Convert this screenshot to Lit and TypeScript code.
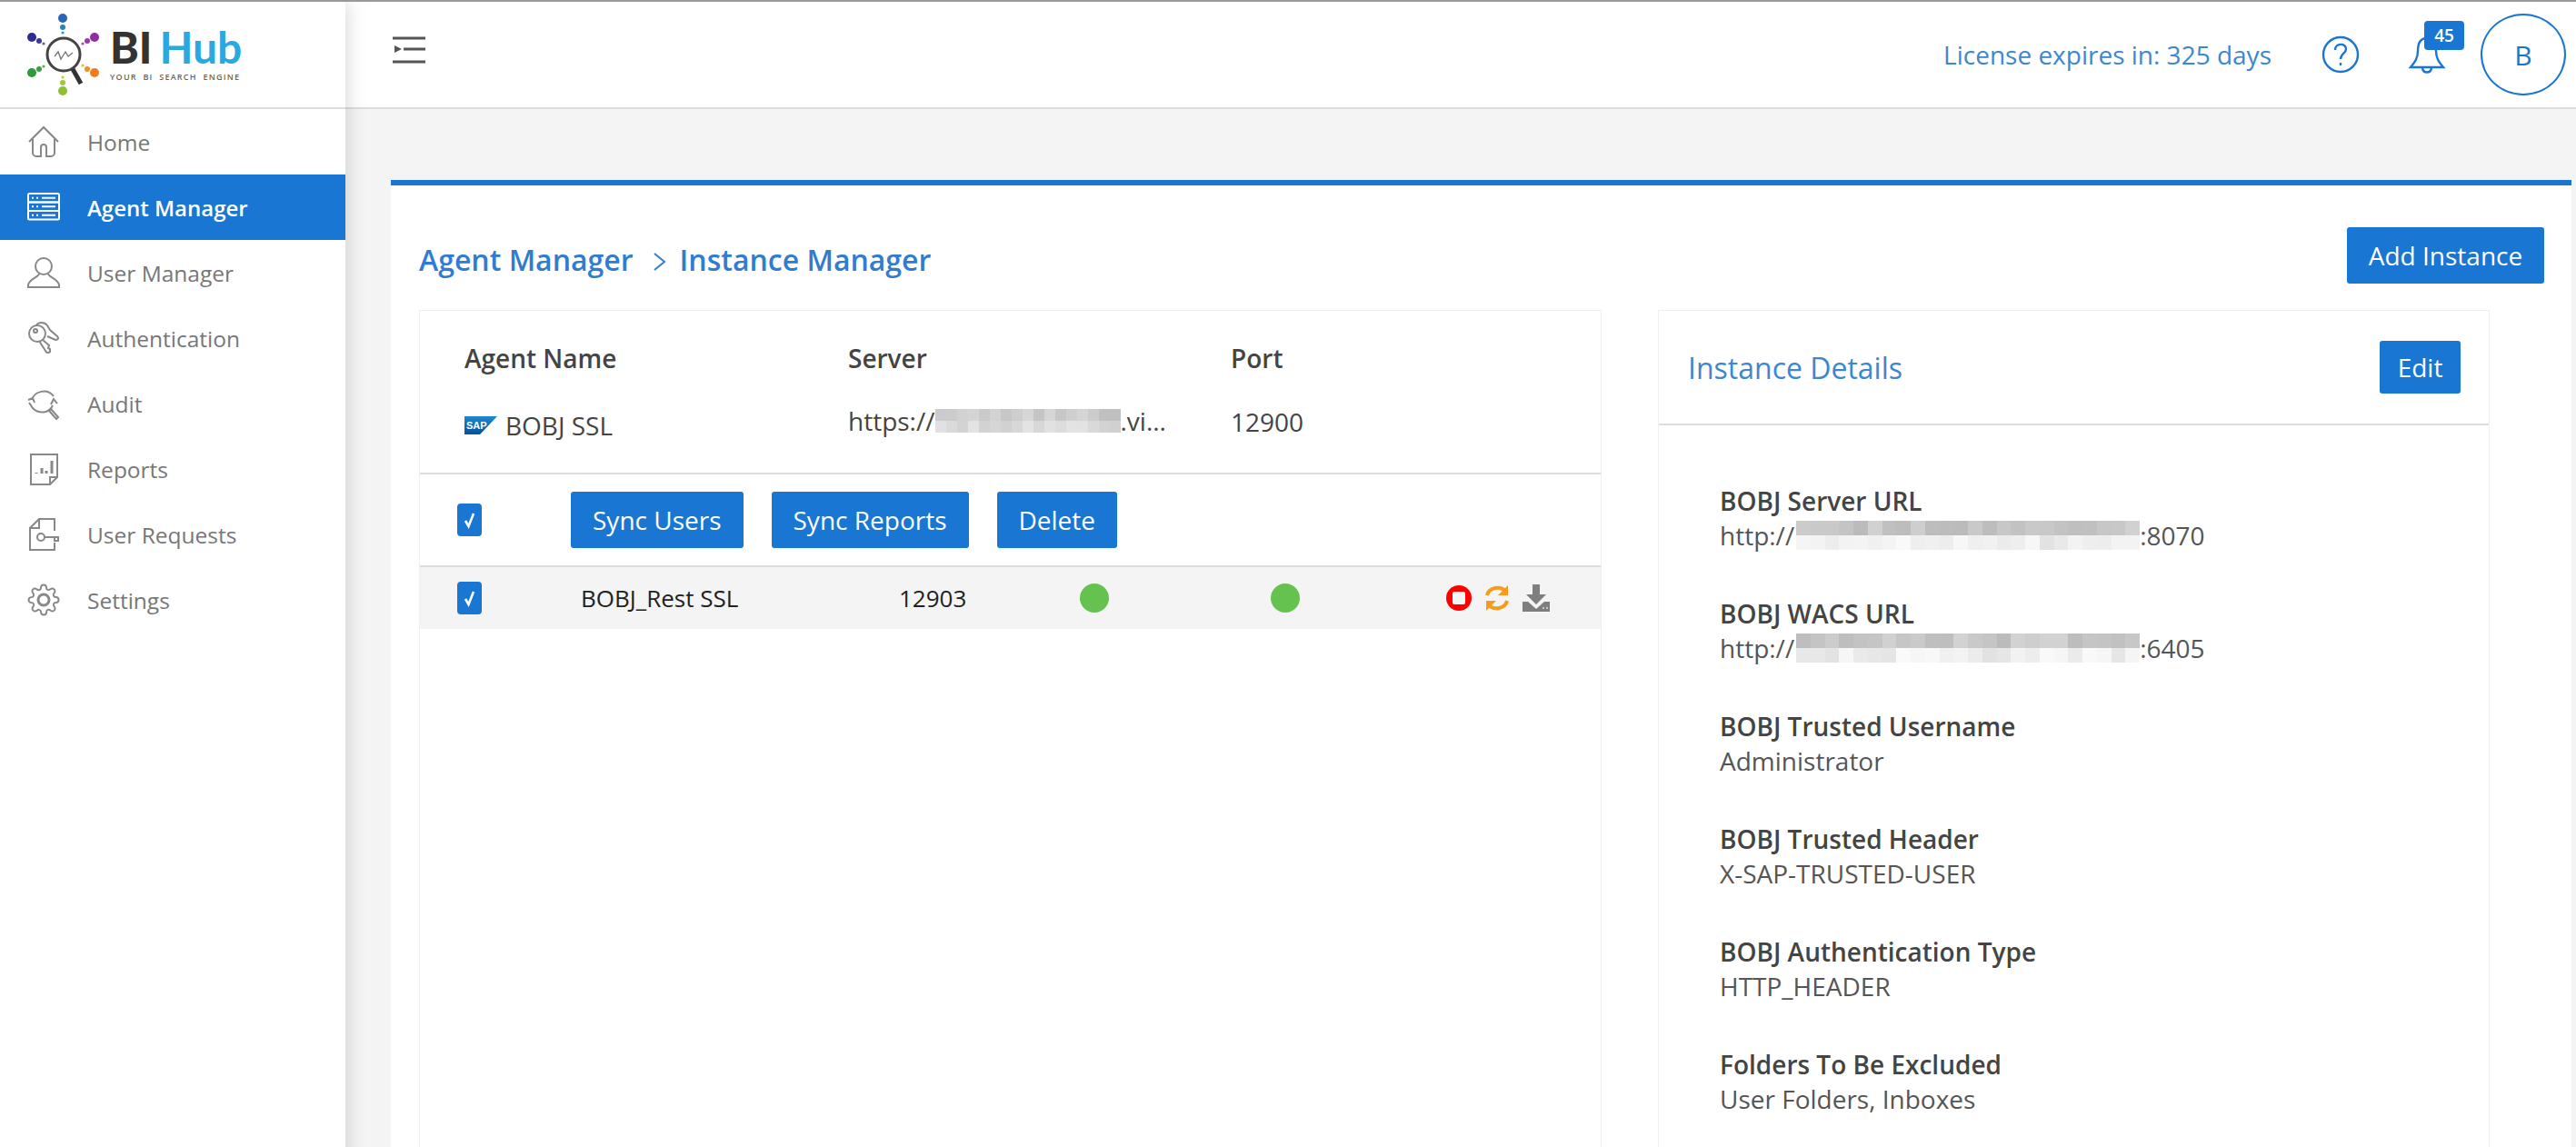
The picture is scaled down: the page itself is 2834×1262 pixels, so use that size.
import { LitElement, html, css, svg } from 'lit';
import { customElement } from 'lit/decorators.js';

const navItems = [
  { label: 'Home', icon: svg`<path d="M2 18 18 2l16 16"/><path d="M6 15v15a4 4 0 0 0 4 4h5V24a3 3 0 0 1 6 0v10h5a4 4 0 0 0 4-4V15"/>` },
  {
    label: 'Agent Manager',
    active: true,
    icon: svg`<rect x="1" y="3" width="34" height="9.5" rx="1.5"/><rect x="1" y="12.5" width="34" height="9.5" rx="1.5"/><rect x="1" y="22" width="34" height="9.5" rx="1.5"/><path d="M5 7.7h2M10 7.7h2M16 7.7h15M5 17.2h2M10 17.2h2M16 17.2h15M5 26.7h2M10 26.7h2M16 26.7h15"/>`,
  },
  { label: 'User Manager', icon: svg`<circle cx="18" cy="11" r="9"/><path d="M13 19c0 4-12 6-12 13v2h34v-2c0-7-12-9-12-13"/>` },
  {
    label: 'Authentication',
    icon: svg`<circle cx="11" cy="13" r="9"/><circle cx="9" cy="10" r="2"/><path d="M10 4c2-4 9-4 12 0l3 5 8 7c2 2 1 4-2 4l-9-4"/><path d="M17 20l7 6-1 3 2 1v3c-2 2-4 1-5-1l-7-11"/>`,
  },
  {
    label: 'Audit',
    icon: svg`<path d="M5 14C8 4 22 1 29 10"/><path d="M28 20c-4 9-15 10-22 3L2 17"/><path d="M1 14l5-2 2 5"/><path d="M26 19l3-6 4 5"/><path d="M26 24l8 9-2 2-8-9z"/>`,
  },
  {
    label: 'Reports',
    icon: svg`<path d="M4 2h29v25l-8 8H4z"/><path d="M33 27h-8v8"/><path d="M10 23v-1M16 23v-6M21 23v-3M27 23V9" stroke-width="3"/>`,
  },
  {
    label: 'User Requests',
    icon: svg`<path d="M30 14V1H13L3 11v24h27v-8"/><path d="M13 1v10H3"/><circle cx="15" cy="21" r="4"/><path d="M19 21h15v4h-4v-4"/>`,
  },
  { label: 'Settings', icon: svg`<g transform="scale(1.5)"><circle cx="12" cy="12" r="4"/><path d="M19.4 15a1.65 1.65 0 0 0 .33 1.82l.06.06a2 2 0 0 1 0 2.83 2 2 0 0 1-2.83 0l-.06-.06a1.65 1.65 0 0 0-1.82-.33 1.65 1.65 0 0 0-1 1.51V21a2 2 0 0 1-2 2 2 2 0 0 1-2-2v-.09A1.65 1.65 0 0 0 9 19.4a1.65 1.65 0 0 0-1.82.33l-.06.06a2 2 0 0 1-2.83 0 2 2 0 0 1 0-2.83l.06-.06a1.65 1.65 0 0 0 .33-1.82 1.65 1.65 0 0 0-1.51-1H3a2 2 0 0 1-2-2 2 2 0 0 1 2-2h.09A1.65 1.65 0 0 0 4.6 9a1.65 1.65 0 0 0-.33-1.82l-.06-.06a2 2 0 0 1 0-2.83 2 2 0 0 1 2.83 0l.06.06a1.65 1.65 0 0 0 1.82.33H9a1.65 1.65 0 0 0 1-1.51V3a2 2 0 0 1 2-2 2 2 0 0 1 2 2v.09a1.65 1.65 0 0 0 1 1.51 1.65 1.65 0 0 0 1.82-.33l.06-.06a2 2 0 0 1 2.83 0 2 2 0 0 1 0 2.83l-.06.06a1.65 1.65 0 0 0-.33 1.82V9a1.65 1.65 0 0 0 1.51 1H21a2 2 0 0 1 2 2 2 2 0 0 1-2 2h-.09a1.65 1.65 0 0 0-1.51 1z" stroke-width="1.3"/></g>` },
];

const details = [
  { label: 'BOBJ Server URL', before: 'http://', blur: true, after: ':8070' },
  { label: 'BOBJ WACS URL', before: 'http://', blur: true, after: ':6405' },
  { label: 'BOBJ Trusted Username', before: 'Administrator' },
  { label: 'BOBJ Trusted Header', before: 'X-SAP-TRUSTED-USER' },
  { label: 'BOBJ Authentication Type', before: 'HTTP_HEADER' },
  { label: 'Folders To Be Excluded', before: 'User Folders, Inboxes' },
];

// the redacted bits of the urls, a little mosaic of greys
function mosaic(cols: number, dark: number, light: number, seed: number) {
  const cells = [];
  for (let row = 0; row < 2; row++) {
    for (let c = 0; c < cols; c++) {
      const n = Math.abs(Math.sin((c + 1) * 12.9898 + seed * 3.1 + row * 78.233) * 43758.5453) % 1;
      const grey = Math.round((row === 0 ? dark : light) + n * 24);
      cells.push(html`<i style="background:rgb(${grey},${grey},${grey})"></i>`);
    }
  }
  return cells;
}

const logoDots = [
  ['#2a66b5', 69, 20, 5], ['#2a80c0', 69, 30, 3], ['#2a9ad0', 69, 36, 1.6],
  ['#2e2c8c', 35, 41, 5], ['#3a3a9a', 43, 45, 3], ['#5060b0', 48, 48, 1.6],
  ['#8e2ea0', 104, 41, 5], ['#9a3ab0', 96, 45, 3], ['#a050b8', 91, 48, 1.6],
  ['#2e9a3a', 35, 80, 5], ['#3aa040', 43, 76, 3], ['#50b050', 48, 73, 1.6],
  ['#f07a20', 104, 80, 5], ['#f09020', 96, 76, 3], ['#f0b030', 91, 72, 1.6],
  ['#8ec030', 69, 100, 5], ['#9ac83a', 69, 91, 3], ['#b0d040', 69, 85, 1.6],
] as const;

@customElement('app-root')
export class AppRoot extends LitElement {
  static styles = css`
    :host {
      display: grid;
      grid-template-columns: 380px 1fr;
      height: 100vh;
      overflow: hidden;
      background: #f4f4f4;
      font-family: 'Open Sans', sans-serif;
      color: #444;
      border-top: 2px solid #999;
      box-sizing: border-box;
    }
    .sidebar {
      background: #fff;
      box-shadow: 0 0 22px rgba(0, 0, 0, 0.18);
      position: relative;
      z-index: 1;
    }
    .logo {
      height: 116px;
      display: flex;
      align-items: flex-start;
      border-bottom: 2px solid #ddd;
      padding-left: 28px;
    }
    .logo svg {
      width: 84px;
      height: 116px;
      flex: none;
    }
    .logo-text {
      margin: 21px 0 0 9px;
      width: 146px;
    }
    .logo-name {
      font-family: 'Lato', sans-serif;
      font-weight: 900;
      font-size: 48px;
      line-height: 58px;
      color: #333;
      white-space: nowrap;
    }
    .logo-name b {
      font-weight: 700;
      color: #29a9e1;
      margin-left: 8px;
    }
    .logo-tag {
      margin-top: -2px;
      font-size: 9px;
      line-height: 11px;
      font-weight: 600;
      color: #666;
      letter-spacing: 1.25px;
      white-space: nowrap;
      word-spacing: 3px;
    }
    .nav-item {
      height: 72px;
      display: flex;
      align-items: center;
      padding-left: 30px;
      font-size: 24.5px;
      color: #777;
    }
    .nav-item svg {
      width: 36px;
      height: 36px;
      margin-right: 30px;
      fill: none;
      stroke: #888;
      stroke-width: 2;
      flex: none;
    }
    .nav-item.active {
      background: #1976d2;
      color: #fff;
      font-size: 24px;
      font-weight: 600;
    }
    .nav-item.active svg {
      stroke: #fff;
    }
    .main {
      min-width: 0;
    }
    .topbar {
      height: 116px;
      background: #fff;
      border-bottom: 2px solid #ddd;
      display: flex;
      align-items: center;
      padding: 0 11px 0 52px;
      color: #3d87cf;
    }
    .menu-btn {
      width: 36px;
      height: 32px;
      margin-bottom: 10px;
      fill: none;
      stroke: #555;
      stroke-width: 3;
    }
    .license {
      margin-left: auto;
      font-size: 28px;
    }
    .help {
      width: 42px;
      height: 42px;
      margin-left: 55px;
      fill: none;
      stroke: #1976d2;
      stroke-width: 2.4;
    }
    .bell-wrap {
      position: relative;
      margin: 0 0 0 53px;
      width: 90px;
      height: 42px;
    }
    .bell-wrap svg {
      width: 42px;
      height: 42px;
      fill: none;
      stroke: #1976d2;
      stroke-width: 2.4;
    }
    .badge {
      position: absolute;
      left: 18px;
      top: -16px;
      width: 44px;
      height: 32px;
      background: #1976d2;
      border-radius: 4px;
      color: #fff;
      font-size: 19px;
      font-weight: 600;
      line-height: 32px;
      text-align: center;
    }
    .avatar {
      width: 90px;
      height: 86px;
      border: 2px solid #1976d2;
      border-radius: 50%;
      display: flex;
      align-items: center;
      justify-content: center;
      font-size: 30px;
      color: #1976d2;
      font-weight: 500;
      margin-left: -10px;
      flex: none;
    }
    .card {
      margin: 78px 5px 0 50px;
      border-top: 6px solid #1976d2;
      background: #fff;
      height: 1100px;
      padding: 46px 30px 0 31px;
      box-sizing: border-box;
    }
    .card-head {
      display: flex;
      align-items: center;
      justify-content: space-between;
      height: 62px;
      margin-bottom: 29px;
    }
    .crumbs {
      display: flex;
      align-items: center;
      color: #2f7dd1;
      font-size: 32px;
      font-weight: 600;
      padding-top: 9px;
    }
    .crumbs svg {
      width: 16px;
      height: 24px;
      margin: 4px 14px 0 21px;
      fill: none;
      stroke: #2f7dd1;
      stroke-width: 2;
    }
    button {
      background: #1976d2;
      border: none;
      border-radius: 3px;
      color: #fff;
      font: 500 28px 'Open Sans', sans-serif;
      height: 62px;
      padding: 0;
    }
    .add {
      width: 217px;
    }
    .panels {
      display: grid;
      grid-template-columns: 1301px 915px;
      gap: 62px;
    }
    .panel {
      border: 1px solid #f0f0f0;
      height: 1000px;
      box-sizing: border-box;
    }
    .agent {
      display: grid;
      grid-template-columns: 422px 421px 1fr;
      grid-auto-rows: 70px;
      padding: 17px 0 21px 49px;
      border-bottom: 2px solid #ddd;
      align-items: center;
      font-size: 28px;
      color: #444;
    }
    .agent .head {
      font-weight: 600;
    }
    .agent-name {
      display: flex;
      align-items: center;
      padding-top: 8px;
    }
    .agent-name svg {
      width: 36px;
      height: 20px;
      margin-right: 9px;
    }
    .server {
      display: flex;
      align-items: center;
      padding-bottom: 2px;
    }
    .mosaic {
      display: inline-grid;
      grid-auto-rows: 13px;
      flex: none;
    }
    .mosaic i {
      display: block;
    }
    .server .mosaic {
      grid-template-columns: repeat(17, 12px);
    }
    .actions {
      height: 100px;
      border-bottom: 2px solid #ddd;
      display: flex;
      align-items: center;
      padding-left: 41px;
      gap: 31px;
    }
    .actions button {
      padding: 0 24px;
    }
    .check {
      width: 27px;
      height: 36px;
      background: #1976d2;
      border-radius: 4px;
      display: flex;
      align-items: center;
      justify-content: center;
      flex: none;
    }
    .check svg {
      width: 14px;
      height: 20px;
      fill: none;
      stroke: #fff;
      stroke-width: 2.6;
    }
    .actions .check {
      margin-right: 67px;
    }
    .row {
      height: 68px;
      background: #f4f4f4;
      display: grid;
      grid-template-columns: 41px 136px 350px 199px 210px 192px auto;
      align-items: center;
      font-size: 26px;
      color: #222;
    }
    .row .check {
      grid-column: 1 / span 2;
      margin-left: 41px;
    }
    .dot {
      width: 32px;
      height: 32px;
      border-radius: 50%;
      background: #66c24f;
    }
    .row-icons {
      display: flex;
      gap: 12px;
      align-items: center;
    }
    .row-icons svg {
      width: 30px;
      height: 32px;
    }
    .row-icons .tray {
      width: 32px;
    }
    .detail-head {
      height: 124px;
      border-bottom: 2px solid #ddd;
      display: flex;
      align-items: center;
      justify-content: space-between;
      padding: 0 31px 0 32px;
      color: #3d87cf;
      font-size: 32px;
    }
    .detail-head button {
      width: 89px;
      height: 58px;
    }
    .detail-list {
      padding: 64px 0 0 67px;
      display: flex;
      flex-direction: column;
      gap: 48px;
    }
    .detail b {
      display: block;
      font-size: 28px;
      font-weight: 600;
      line-height: 38px;
      color: #444;
    }
    .detail div {
      display: flex;
      align-items: center;
      font-size: 28px;
      line-height: 38px;
      color: #555;
    }
    .detail .mosaic {
      grid-template-columns: repeat(24, 15.75px);
      grid-auto-rows: 16px;
      margin-left: 2px;
    }
  `;

  render() {
    const check = html`<span class="check"><svg viewBox="0 0 14 20"><path d="M2 11l3.5 6L11 3"/></svg></span>`;
    return html`
      <aside class="sidebar">
        <div class="logo">
          <svg viewBox="28 2 84 116">
            ${logoDots.map(([c, x, y, r]) => svg`<circle cx=${x} cy=${y} r=${r} fill=${c}/>`)}
            <circle cx="70" cy="60" r="18" fill="#fff" stroke="#444" stroke-width="3"/>
            <path d="M60 62l4-5 3 8 5-8 3 5 5-4" fill="none" stroke="#777" stroke-width="1.4"/>
            <path d="M80 76l9 16" stroke="#333" stroke-width="5"/>
          </svg>
          <div class="logo-text">
            <div class="logo-name">BI<b>Hub</b></div>
            <div class="logo-tag">YOUR BI SEARCH ENGINE</div>
          </div>
        </div>
        <nav>
          ${navItems.map(
            (n) => html`<div class="nav-item ${n.active ? 'active' : ''}">
              <svg viewBox="0 0 36 36">${n.icon}</svg>${n.label}
            </div>`
          )}
        </nav>
      </aside>
      <div class="main">
        <header class="topbar">
          <svg class="menu-btn" viewBox="0 0 36 32">
            <path d="M0 3h36M12 15h24M0 29h36"/>
            <path d="M2 11l8 4-8 4z" fill="#555" stroke="none"/>
          </svg>
          <span class="license">License expires in: 325 days</span>
          <svg class="help" viewBox="0 0 42 42">
            <circle cx="21" cy="21" r="19"/>
            <path d="M15 16c0-8 12-8 12-1 0 5-6 5-6 11"/>
            <path d="M21 30v3"/>
          </svg>
          <div class="bell-wrap">
            <svg viewBox="0 0 42 42">
              <path d="M21 3c-8 0-10 7-10 14 0 8-3 12-8 18h36c-5-6-8-10-8-18 0-7-2-14-10-14z"/>
              <path d="M16 36c1 6 9 6 10 0"/>
            </svg>
            <span class="badge">45</span>
          </div>
          <div class="avatar">B</div>
        </header>
        <section class="card">
          <div class="card-head">
            <div class="crumbs">
              Agent Manager
              <svg viewBox="0 0 16 24"><path d="M2 3l11 9-11 9"/></svg>
              Instance Manager
            </div>
            <button class="add">Add Instance</button>
          </div>
          <div class="panels">
            <div class="panel">
              <div class="agent">
                <span class="head">Agent Name</span>
                <span class="head">Server</span>
                <span class="head">Port</span>
                <span class="agent-name">
                  <svg viewBox="0 0 36 20">
                    <defs>
                      <linearGradient id="sap" x1="0" y1="0" x2="0" y2="1">
                        <stop offset="0" stop-color="#1a8ad0"/>
                        <stop offset="1" stop-color="#0a4f9a"/>
                      </linearGradient>
                    </defs>
                    <path d="M0 0h36L17 20H0z" fill="url(#sap)"/>
                    <text x="2" y="14" font-size="11" font-weight="700" font-family="Liberation Sans" fill="#fff">SAP</text>
                  </svg>
                  BOBJ SSL
                </span>
                <span class="server">https://<span class="mosaic">${mosaic(17, 190, 208, 1)}</span>.vi...</span>
                <span>12900</span>
              </div>
              <div class="actions">
                ${check}
                <button>Sync Users</button>
                <button>Sync Reports</button>
                <button>Delete</button>
              </div>
              <div class="row">
                ${check}
                <span>BOBJ_Rest SSL</span>
                <span>12903</span>
                <span class="dot"></span>
                <span class="dot"></span>
                <span class="row-icons">
                  <svg viewBox="0 0 30 32">
                    <circle cx="15" cy="16" r="14" fill="#f00"/>
                    <rect x="8" y="9" width="14" height="14" rx="2" fill="#f4f4f4"/>
                  </svg>
                  <svg viewBox="0 0 30 32" fill="none" stroke="#fb9a1a" stroke-width="4">
                    <path d="M4 13C6 4 19 2 25 9"/>
                    <path d="M26 19c-2 9-15 11-21 4"/>
                    <path d="M27 2v11H16z" fill="#fb9a1a" stroke="none"/>
                    <path d="M3 30V19h11z" fill="#fb9a1a" stroke="none"/>
                  </svg>
                  <svg class="tray" viewBox="0 0 30 32">
                    <path d="M11 1h8v11h7L15 23 4 12h7z" fill="#7f7f7f"/>
                    <path d="M0 20h6l9 8 9-8h6v11H0z" fill="#7f7f7f"/>
                    <path d="M22 27h2M26 27h2" stroke="#ddd" stroke-width="1.5"/>
                  </svg>
                </span>
              </div>
            </div>
            <div class="panel">
              <div class="detail-head">
                <span>Instance Details</span>
                <button>Edit</button>
              </div>
              <div class="detail-list">
                ${details.map(
                  (d, i) => html`<div class="detail">
                    <b>${d.label}</b>
                    <div>
                      ${d.before}${d.blur ? html`<span class="mosaic">${mosaic(24, 186, 226, i + 5)}</span>` : ''}${d.after ?? ''}
                    </div>
                  </div>`
                )}
              </div>
            </div>
          </div>
        </section>
      </div>
    `;
  }
}
